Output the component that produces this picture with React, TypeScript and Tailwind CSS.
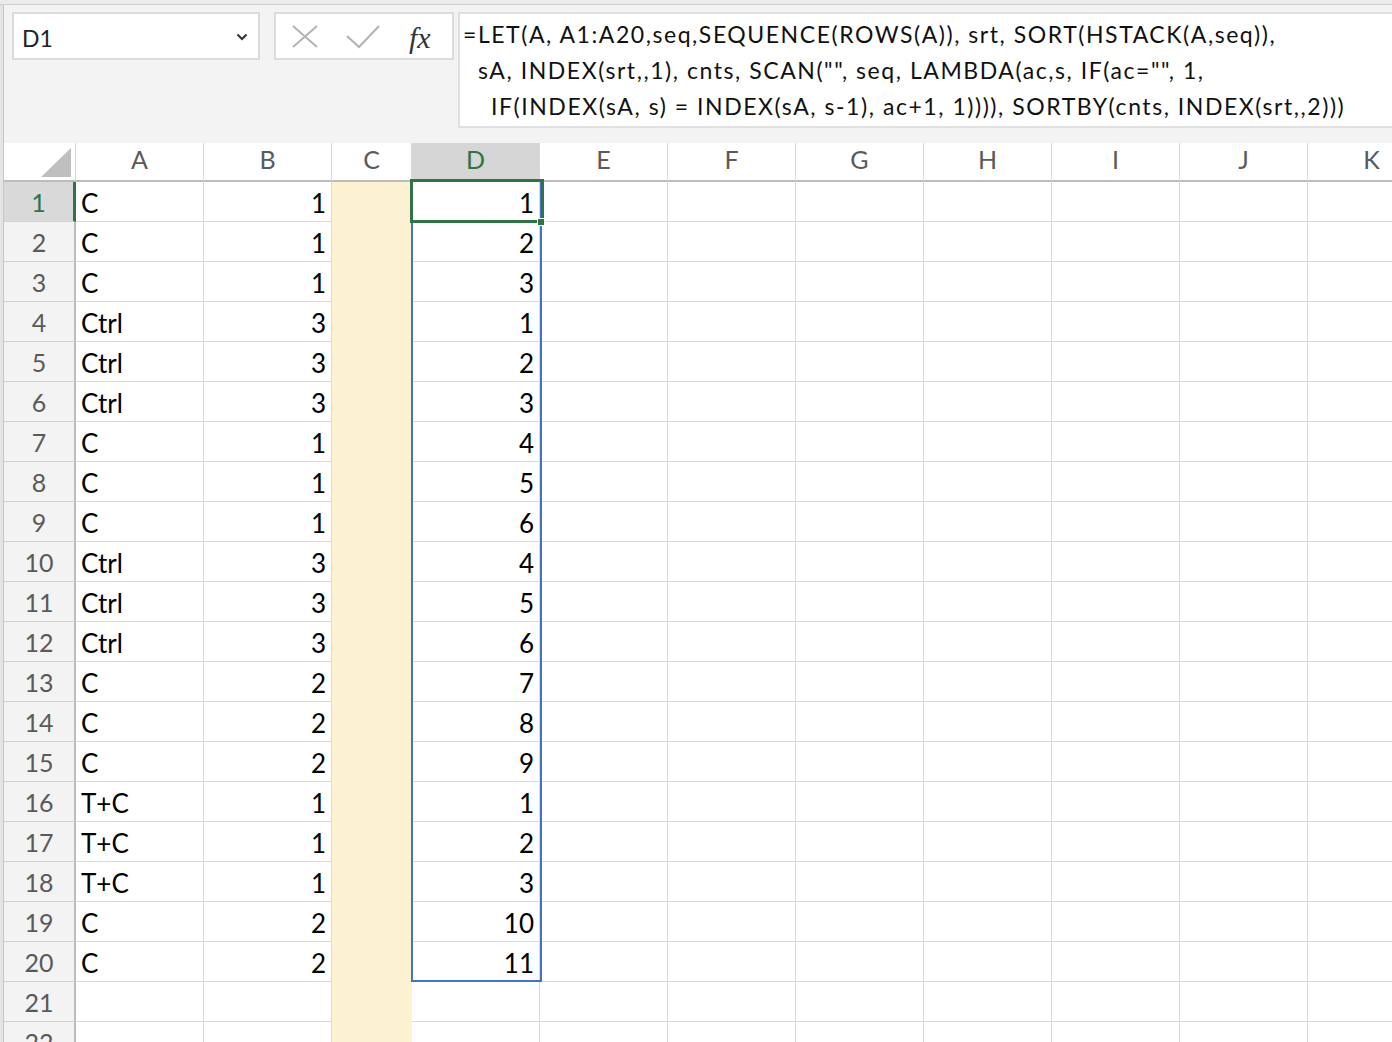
import React from "react";

const GREEN = "#2f7446";

const COLUMNS = [
  { id: "A", w: "w-[128px]" },
  { id: "B", w: "w-[128px]" },
  { id: "C", w: "w-[80px]" },
  { id: "D", w: "w-[128px]" },
  { id: "E", w: "w-[128px]" },
  { id: "F", w: "w-[128px]" },
  { id: "G", w: "w-[128px]" },
  { id: "H", w: "w-[128px]" },
  { id: "I", w: "w-[128px]" },
  { id: "J", w: "w-[128px]" },
  { id: "K", w: "w-[128px]" },
];

const DATA: [string, number, number][] = [
  ["C", 1, 1],
  ["C", 1, 2],
  ["C", 1, 3],
  ["Ctrl", 3, 1],
  ["Ctrl", 3, 2],
  ["Ctrl", 3, 3],
  ["C", 1, 4],
  ["C", 1, 5],
  ["C", 1, 6],
  ["Ctrl", 3, 4],
  ["Ctrl", 3, 5],
  ["Ctrl", 3, 6],
  ["C", 2, 7],
  ["C", 2, 8],
  ["C", 2, 9],
  ["T+C", 1, 1],
  ["T+C", 1, 2],
  ["T+C", 1, 3],
  ["C", 2, 10],
  ["C", 2, 11],
];

const FormulaBar = () => (
  <div className="flex h-[138px] bg-[#f3f3f3] pt-[7px]">
    {/* name box */}
    <div className="ml-[8px] flex h-[48px] w-[248px] shrink-0 items-center justify-between border-2 border-[#dcdcdc] bg-white pl-[8px] pr-[10px] pt-[4px]">
      <span className="text-[23px] text-[#222]">D1</span>
      <svg width="12" height="8" viewBox="0 0 12 8" className="mt-[-2px]">
        <path d="M1.5 1.5 L6 6 L10.5 1.5" fill="none" stroke="#333" strokeWidth="2" />
      </svg>
    </div>

    {/* cancel / enter / fx */}
    <div className="relative ml-[14px] h-[48px] w-[180px] shrink-0 border-2 border-[#dcdcdc] bg-white">
      <svg width="180" height="48" viewBox="0 0 180 48" className="absolute left-[-2px] top-[-2px]">
        <path d="M19 14 L43 35 M43 14 L19 35" stroke="#b3b3b3" strokeWidth="2" fill="none" />
        <path d="M73 24 L85 35 L105 14" stroke="#b3b3b3" strokeWidth="2" fill="none" />
      </svg>
      <span className="absolute left-[133px] top-[1px] font-['Liberation_Serif',serif] text-[30px] italic text-[#333]">
        fx
      </span>
    </div>

    {/* formula */}
    <div className="ml-[4px] h-[116px] flex-1 border-2 border-r-0 border-[#e0e0e0] bg-white pl-[3px] pt-[2px] text-[23px] leading-[36px] tracking-[1.55px] text-[#111] whitespace-pre">
      <div>=LET(A, A1:A20,seq,SEQUENCE(ROWS(A)), srt, SORT(HSTACK(A,seq)),</div>
      <div className="pl-[15px]">sA, INDEX(srt,,1), cnts, SCAN("", seq, LAMBDA(ac,s, IF(ac="", 1,</div>
      <div className="pl-[28px]">IF(INDEX(sA, s) = INDEX(sA, s-1), ac+1, 1)))), SORTBY(cnts, INDEX(srt,,2)))</div>
    </div>
  </div>
);

const HeaderRow = () => (
  <div className="flex h-[39px]">
    <div className="flex w-[72px] shrink-0 items-end justify-end border-b-2 border-r border-b-[#bcbcbc] border-r-[#d9d9d9] pb-[3px] pr-[4px]">
      <svg width="30" height="29" viewBox="0 0 30 29">
        <path d="M30 0 L30 29 L0 29 Z" fill="#bfbfbf" />
      </svg>
    </div>
    {COLUMNS.map((c) => (
      <div
        key={c.id}
        className={`${c.w} flex shrink-0 items-center justify-center border-b-2 border-r border-b-[#bcbcbc] border-r-[#d9d9d9] pb-[4px] text-[25px] ${
          c.id === "D" ? "bg-[#d6d6d6] text-[#2f7446]" : "text-[#5a5a5a]"
        }`}
      >
        {c.id}
      </div>
    ))}
  </div>
);

const Row = ({ n, a, b, d }: { n: number; a?: string; b?: number; d?: number }) => {
  const sel = n === 1;
  return (
    <div className="flex h-[40px]">
      <div
        className={`flex w-[72px] shrink-0 items-center justify-center border-b border-b-[#d2d2d2] pt-[2px] text-[25px] ${
          sel
            ? "border-r-[3px] border-r-[#2f7446] bg-[#d9d9d9] text-[#2f7446]"
            : "border-r-2 border-r-[#bcbcbc] bg-[#f3f3f3] text-[#5a5a5a]"
        }`}
      >
        {n}
      </div>
      {COLUMNS.map((c) => {
        if (c.id === "C") {
          return <div key={c.id} className="w-[80px] shrink-0 bg-[#fcf2d2]" />;
        }
        let content: React.ReactNode = null;
        let align = "justify-start pl-[5px]";
        if (c.id === "A") content = a;
        if (c.id === "B") {
          content = b;
          align = "justify-end pr-[5px]";
        }
        if (c.id === "D") {
          content = d;
          align = "justify-end pr-[5px]";
        }
        return (
          <div
            key={c.id}
            className={`${c.w} flex shrink-0 items-center border-b border-r border-[#dadada] bg-white pt-[3px] text-[26px] text-black ${align}`}
          >
            {content}
          </div>
        );
      })}
    </div>
  );
};

export default function App() {
  return (
    <div className="h-[1042px] w-[1392px] overflow-hidden bg-white font-['Lato',sans-serif]">
      <div className="h-[5px] border-b border-[#cfcfcf] bg-[#ececec]" />
      <div className="flex">
        <div className="h-[1037px] w-[4px] shrink-0 border-r border-[#c6c6c6] bg-[#e4e4e4]" />
        <div className="min-w-0 flex-1 overflow-hidden">
          <FormulaBar />
          <div className="relative">
            <HeaderRow />
            {DATA.map(([a, b, d], i) => (
              <Row key={i} n={i + 1} a={a} b={b} d={d} />
            ))}
            <Row n={21} />
            <Row n={22} />

            {/* selected range D1:D20 */}
            <div className="absolute left-[407px] top-[37px] h-[802px] w-[131px] border-2 border-[#4472c4]" />
            {/* active cell D1 */}
            <div
              className="absolute left-[406px] top-[36px] h-[44px] w-[134px] border-[3px]"
              style={{ borderColor: GREEN }}
            />
            <div className="absolute left-[533px] top-[75px] h-[8px] w-[8px] border border-white bg-[#2f7446]" />
          </div>
        </div>
      </div>
    </div>
  );
}
